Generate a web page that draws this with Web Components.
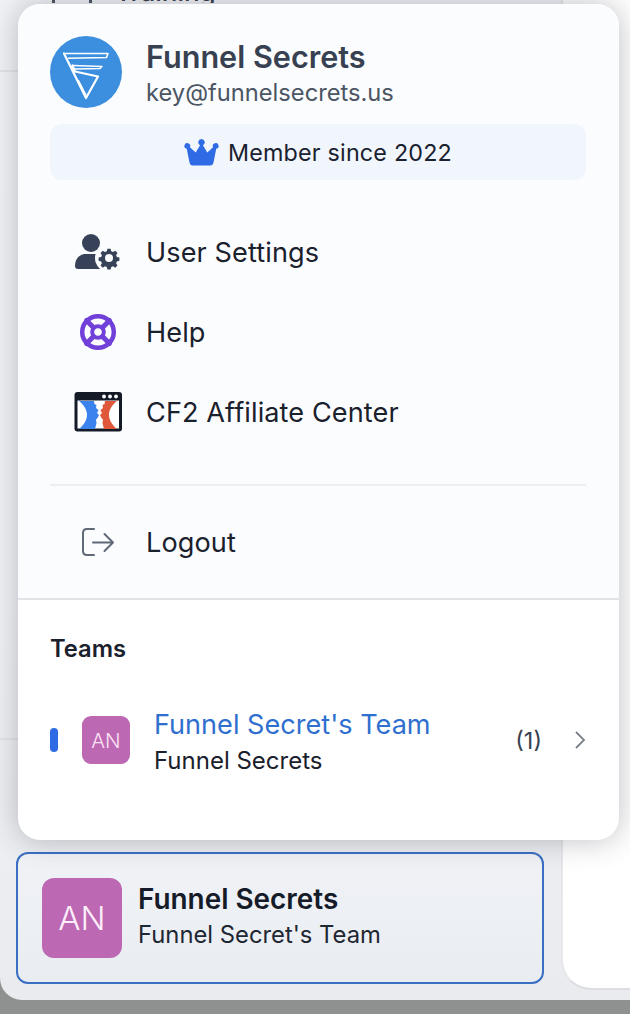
<!DOCTYPE html>
<html>
<head>
<meta charset="utf-8">
<style>
  html, body { margin: 0; height: 100%; }
  body { font-family: Inter, "Liberation Sans", sans-serif; background: #8f9191; overflow: hidden; }
</style>
</head>
<body>
<app-shell>
  <nav-clip slot="sidebar"></nav-clip>
  <team-card slot="sidebar" initials="AN" name="Funnel Secrets" team="Funnel Secret's Team"></team-card>
  <account-menu slot="popup">
    <menu-header></menu-header>
    <menu-row label="User Settings"><svg viewBox="0 0 48 48" width="48" height="48" fill="#374258">
      <circle cx="17" cy="15" r="9"/>
      <path d="M1 38c0-8 5-12 11-12h10c3 0 5 1 7 2v13H4c-2 0-3-1-3-3z"/>
      <circle cx="35" cy="30" r="14" fill="#fbfcfe"/>
      <path fill-rule="evenodd" d="M33 20h4l.8 3.200 2.200.9 2.800-1.700 2.800 2.800-1.700 2.800.9 2.200 3.200.8v4l-3.200.8-.9 2.200 1.700 2.800-2.800 2.800-2.800-1.700-2.200.9-.8 3.200h-4l-.8-3.200-2.200-.9-2.800 1.700-2.800-2.800 1.700-2.800-.9-2.200-3.200-.8v-4l3.200-.8.9-2.200-1.700-2.800 2.800-2.800 2.800 1.700 2.200-.9zM35 26.500a5 5 0 1 0 0 10 5 5 0 0 0 0-10z" transform="translate(35 30) scale(.8) translate(-35 -31.500)"/>
    </svg></menu-row>
    <menu-row label="Help"><svg viewBox="0 0 48 48" width="48" height="48" fill="none" stroke="#7040d8">
      <circle cx="24" cy="24" r="15.800" stroke-width="4.500"/>
      <circle cx="24" cy="24" r="5.800" stroke-width="4"/>
      <path stroke-width="5" stroke-linecap="round" d="M12.500 12.500l7 7M35.500 12.500l-7 7M12.500 35.500l7-7M35.500 35.500l-7-7"/>
    </svg></menu-row>
    <menu-row label="CF2 Affiliate Center"><svg viewBox="0 0 48 48" width="48" height="48">
      <rect x="2" y="5.500" width="44.500" height="36.500" rx="1.500" fill="#fff" stroke="#141a26" stroke-width="3"/>
      <rect x="2" y="5" width="44.500" height="7.500" fill="#141a26"/>
      <g fill="#fff"><circle cx="30" cy="8.500" r="1.900"/><circle cx="36" cy="8.500" r="1.900"/><circle cx="42" cy="8.500" r="1.900"/></g>
      <path fill="#3b82ee" d="M4 13h16l.5 3 2 1-.5 3 2.500 2-1.500 3 2 2-1.500 3-1.500 1.500.5 3.500-1.500 6H5c5-4 8-9 8-14.500 0-5-3.500-10-9-14.500z"/>
      <path fill="#e0583a" d="M44 13H31l-.5 3-2 1 .5 3-2.500 2 1.500 3-2 2 1.500 3 1.500 1.500-.5 3.500 1.500 6H43c-5-4-8-9-8-14.500 0-5 3.500-10 9-14.500z"/>
    </svg></menu-row>
    <menu-divider></menu-divider>
    <menu-row label="Logout" class="logout"><svg viewBox="0 0 48 48" width="48" height="48" fill="none" stroke="#5f6876" stroke-width="2" stroke-linecap="round" stroke-linejoin="round">
      <path d="M20 11h-7c-2.500 0-4 1.500-4 4v18c0 2.500 1.500 4 4 4h7"/>
      <path d="M19 24.500h20M30.500 16l8.500 8.500-8.500 8.500"/>
    </svg></menu-row>
    <team-list slot="footer"></team-list>
  </account-menu>
</app-shell>

<script>
class AppShell extends HTMLElement {
  connectedCallback() {
    this.attachShadow({ mode: 'open' });
    this.shadowRoot.innerHTML = `
      <style>
        :host { display: block; position: relative; height: 1014px; overflow: hidden; }
        .frame {
          height: 1000px;
          background: linear-gradient(180deg, #f2f3f6 0%, #f1f3f6 60%, #e9ebef 100%);
          display: grid;
          grid-template-columns: 561px 1fr;
          border-bottom-left-radius: 22px;
          overflow: hidden;
        }
        .side { display: flex; flex-direction: column; padding-bottom: 16px; box-sizing: border-box; }
        .main {
          background: #fff;
          border-left: 2px solid #e6e7e9;
          border-bottom: 2px solid #dcdee1;
          border-bottom-left-radius: 30px;
          margin-bottom: 10px;
          box-sizing: border-box;
        }
        .popup { position: absolute; left: 18px; top: 4px; }
      </style>
      <div class="frame">
        <div class="side"><slot name="sidebar"></slot></div>
        <div class="main"></div>
      </div>
      <div class="popup"><slot name="popup"></slot></div>
    `;
  }
}

class NavClip extends HTMLElement {
  connectedCallback() {
    this.attachShadow({ mode: 'open' });
    this.shadowRoot.innerHTML = `
      <style>
        :host { display: block; flex: 1; box-sizing: border-box; }
        .clip { height: 3px; overflow: hidden; display: flex; align-items: flex-end; padding-left: 52px; gap: 34px; }
        .clip i { width: 3px; height: 3px; background: #4b5563; flex: none; }
        .clip i + i { margin-right: -11px; }
        .clip span { font-size: 26px; line-height: 24px; font-weight: 500; color: #374151; white-space: nowrap; align-self: flex-start; margin-top: -20px; }
        .rule { height: 2px; background: #e3e5e8; margin-top: 67px; }
        .rule.two { margin-top: 666px; }
      </style>
      <div class="clip"><i></i><i></i><span>Training</span></div>
      <div class="rule"></div>
      <div class="rule two"></div>
    `;
  }
}

class TeamCard extends HTMLElement {
  connectedCallback() {
    this.attachShadow({ mode: 'open' });
    this.shadowRoot.innerHTML = `
      <style>
        :host { display: block; margin-left: 16px; width: 528px; }
        .card {
          box-sizing: border-box;
          height: 132px;
          display: flex;
          align-items: center;
          gap: 16px;
          padding-left: 24px;
          border: 2px solid #3b6fc4;
          border-radius: 12px;
          background: linear-gradient(180deg, #f0f2f6, #e9edf2);
        }
        .avatar {
          width: 80px; height: 80px; border-radius: 12px;
          background: #bd68b2; color: #fdeefb;
          display: flex; align-items: center; justify-content: center;
          font-size: 33px; font-weight: 300;
        }
        .name { font-size: 27.900px; line-height: 36px; font-weight: 600; color: #151b28; margin-top: -2px; }
        .team { font-size: 23.800px; line-height: 36px; color: #1f2733; }
      </style>
      <div class="card">
        <div class="avatar">${this.getAttribute('initials')}</div>
        <div>
          <div class="name">${this.getAttribute('name')}</div>
          <div class="team">${this.getAttribute('team')}</div>
        </div>
      </div>
    `;
  }
}

class AccountMenu extends HTMLElement {
  connectedCallback() {
    this.attachShadow({ mode: 'open' });
    this.shadowRoot.innerHTML = `
      <style>
        :host {
          display: block; box-sizing: border-box; width: 601px; height: 836px;
          border-radius: 22px; background: #fff; overflow: hidden;
          box-shadow: 0 0 30px rgba(40, 44, 55, .3);
        }
        .top { box-sizing: border-box; height: 596px; background: #fbfcfe; padding: 32px 33px 0 32px; border-bottom: 2px solid #e1e4e7; }
      </style>
      <div class="top"><slot></slot></div>
      <slot name="footer"></slot>
    `;
  }
}

class MenuHeader extends HTMLElement {
  connectedCallback() {
    this.attachShadow({ mode: 'open' });
    this.shadowRoot.innerHTML = `
      <style>
        :host { display: block; }
        .who { display: flex; align-items: center; gap: 24px; height: 72px; }
        .name { font-size: 30.600px; line-height: 36px; font-weight: 600; color: #374151; margin-top: 4px; }
        .mail { font-size: 23.700px; line-height: 34px; color: #4b5563; margin-top: 1px; }
        .since {
          margin-top: 16px; height: 56px; border-radius: 12px; background: #f1f6fc;
          display: flex; align-items: center; justify-content: center; gap: 9px;
          font-size: 23.300px; color: #1a2130; letter-spacing: .2px; padding-top: 1px; box-sizing: border-box;
        }
        svg { display: block; }
      </style>
      <div class="who">
        <svg width="72" height="72" viewBox="0 0 72 72">
          <circle cx="36" cy="36" r="36" fill="#3c8fdf"/>
          <g fill="none" stroke="#fff" stroke-linejoin="round" stroke-linecap="round">
            <path stroke-width="1.600" d="M14 17.500h44l-1.500 4-38 .8"/>
            <path stroke-width="2.200" d="M14 17.500L36 62 48 40.500 25 35.500l-2.500-6"/>
            <path stroke-width="1.400" d="M23 29.500 52 30.500 50 32.500 25 33"/>
            <path stroke-width="1.400" d="M28.500 44.500 36 59"/>
          </g>
        </svg>
        <div>
          <div class="name">Funnel Secrets</div>
          <div class="mail">key@funnelsecrets.us</div>
        </div>
      </div>
      <div class="since">
        <svg width="35" height="27" viewBox="0 0 36 28"><path fill="#2f6be4" d="M18 0a3.500 3.500 0 0 1 1.500 6.600L24 14l6-5.500a3 3 0 1 1 3.300 1.700L30.500 24c-.3 2-1.500 3.500-3.500 3.500H9c-2 0-3.200-1.500-3.500-3.500L2.700 10.200A3 3 0 1 1 6 8.500L12 14l4.500-7.400A3.500 3.500 0 0 1 18 0z"/></svg>
        <span>Member since 2022</span>
      </div>
    `;
  }
}

class MenuRow extends HTMLElement {
  connectedCallback() {
    this.attachShadow({ mode: 'open' });
    this.shadowRoot.innerHTML = `
      <style>
        :host { display: flex; align-items: center; gap: 24px; height: 80px; padding-left: 24px; color: #1a202c; }
        :host(:first-of-type) { margin-top: 32px; }
        .ic { width: 48px; height: 48px; flex: none; }
        .txt { font-size: 27.100px; letter-spacing: .1px; }
      </style>
      <div class="ic"><slot></slot></div>
      <div class="txt">${this.getAttribute('label')}</div>
    `;
  }
}

class MenuDivider extends HTMLElement {
  connectedCallback() {
    this.attachShadow({ mode: 'open' });
    this.shadowRoot.innerHTML = `
      <style>:host { display: block; height: 2px; background: #eceef1; margin: 32px 0 16px; }</style>
    `;
  }
}

class TeamList extends HTMLElement {
  connectedCallback() {
    this.attachShadow({ mode: 'open' });
    this.shadowRoot.innerHTML = `
      <style>
        :host { display: block; padding: 33px 33px 0 33px; }
        h3 { margin: 0 0 0 -1px; font-size: 23.700px; line-height: 32px; font-weight: 600; color: #1a202c; }
        .row { display: flex; align-items: center; margin-top: 39px; margin-left: -1px; height: 72px; }
        .mark { width: 8px; height: 24px; border-radius: 4px; background: #2f6be4; margin-right: 24px; }
        .avatar {
          width: 48px; height: 48px; border-radius: 9px; background: #bd68b2; color: #fbe3f7;
          display: flex; align-items: center; justify-content: center; font-size: 20.500px; font-weight: 300; margin-right: 24px; flex: none;
        }
        .text { flex: 1; padding-top: 5px; }
        .t1 { font-size: 27.100px; line-height: 36px; color: #2f6fd0; }
        .t2 { font-size: 24px; line-height: 36px; color: #1a202c; }
        .count { font-size: 23.500px; color: #374151; margin-right: 32px; }
        svg { display: block; }
      </style>
      <h3>Teams</h3>
      <div class="row">
        <div class="mark"></div>
        <div class="avatar">AN</div>
        <div class="text">
          <div class="t1">Funnel Secret's Team</div>
          <div class="t2">Funnel Secrets</div>
        </div>
        <div class="count">(1)</div>
        <svg width="12" height="20" viewBox="0 0 12 20" fill="none" stroke="#7b818a" stroke-width="1.800"><path d="M2 2l8 8-8 8"/></svg>
      </div>
    `;
  }
}

customElements.define('app-shell', AppShell);
customElements.define('nav-clip', NavClip);
customElements.define('team-card', TeamCard);
customElements.define('account-menu', AccountMenu);
customElements.define('menu-header', MenuHeader);
customElements.define('menu-row', MenuRow);
customElements.define('menu-divider', MenuDivider);
customElements.define('team-list', TeamList);
</script>
</body>
</html>
